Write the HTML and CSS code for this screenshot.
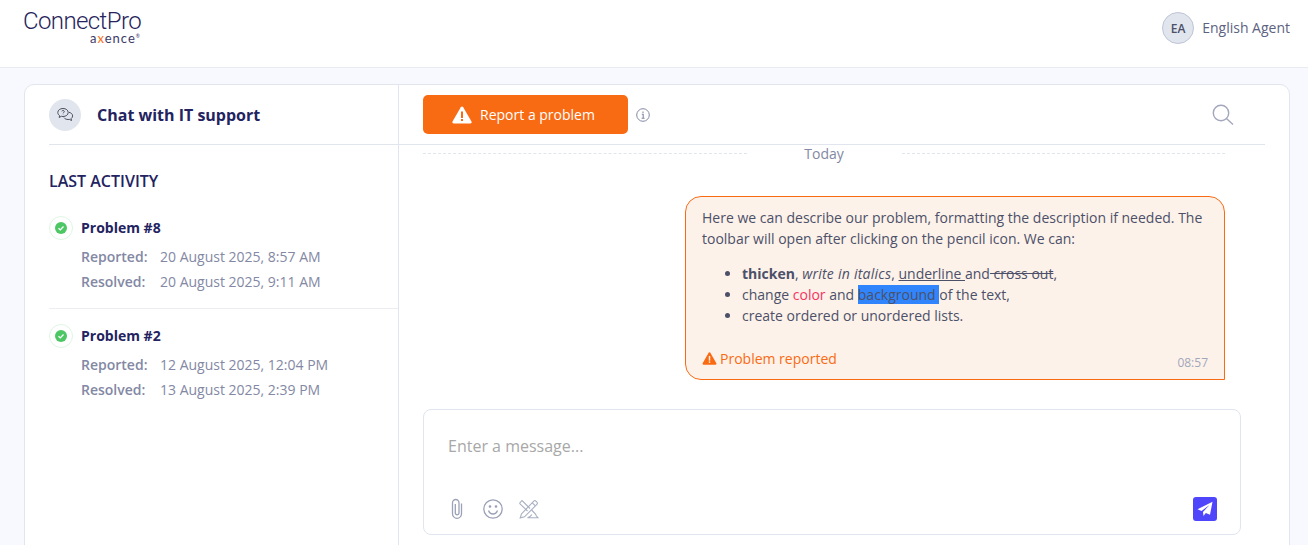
FILE: index.html
```html
<!DOCTYPE html>
<html lang="en">
<head>
<meta charset="utf-8">
<title>ConnectPro</title>
<link rel="stylesheet" href="styles.css">
</head>
<body>
<header class="topbar">
  <div class="logo">
    <span class="logo-main">ConnectPro</span>
    <span class="logo-sub">a<b>x</b>ence<sup>®</sup></span>
  </div>
  <div class="user">
    <span class="user-avatar">EA</span>
    <span class="user-name">English Agent</span>
  </div>
</header>
<main class="page">
  <section class="card">
    <aside class="side">
      <div class="side-head">
        <span class="side-icon">
          <svg width="20" height="20" viewBox="0 0 20 20" fill="none" stroke="#4b4f5e" stroke-width="1"><path d="M8 3.500c-3 0-5.200 1.700-5.200 4 0 1.300.7 2.400 1.800 3.100l-.4 1.900 2.200-1.200c.5.100 1 .2 1.600.2 3 0 5.200-1.700 5.200-4s-2.200-4-5.200-4z"/><path d="M14 7.300c2.100.4 3.600 1.800 3.600 3.600 0 1.100-.6 2.100-1.500 2.700l.4 1.900-2.100-1.100c-.4.100-.9.100-1.300.100-1.800 0-3.300-.7-4.100-1.800"/><path d="M6.800 6.300c.2-1.100 2.500-1.100 2.500.2 0 1-1.200 1-1.200 1.900M8.100 9.500v.3"/></svg>
        </span>
        <h1 class="side-title">Chat with IT support</h1>
      </div>
      <h2 class="activity-title">LAST ACTIVITY</h2>
      <article class="problem problem-first">
        <div class="problem-head">
          <span class="status"><svg width="12" height="12" viewBox="0 0 12 12"><circle cx="6" cy="6" r="6" fill="#4cc764"/><path d="M3.500 6.200l1.800 1.700 3.200-3.400" fill="none" stroke="#fff" stroke-width="1.300"/></svg></span>
          <h3 class="problem-name">Problem #8</h3>
        </div>
        <div class="problem-row"><span class="label">Reported:</span><span>20 August 2025, 8:57 AM</span></div>
        <div class="problem-row"><span class="label">Resolved:</span><span>20 August 2025, 9:11 AM</span></div>
      </article>
      <article class="problem">
        <div class="problem-head">
          <span class="status"><svg width="12" height="12" viewBox="0 0 12 12"><circle cx="6" cy="6" r="6" fill="#4cc764"/><path d="M3.500 6.200l1.800 1.700 3.200-3.400" fill="none" stroke="#fff" stroke-width="1.300"/></svg></span>
          <h3 class="problem-name">Problem #2</h3>
        </div>
        <div class="problem-row"><span class="label">Reported:</span><span>12 August 2025, 12:04 PM</span></div>
        <div class="problem-row"><span class="label">Resolved:</span><span>13 August 2025, 2:39 PM</span></div>
      </article>
    </aside>
    <div class="chat">
      <div class="chat-head">
        <button class="report" type="button">
          <svg width="20" height="18" viewBox="0 0 20 18"><path d="M10 0.500c.5 0 .9.300 1.200.700l8.300 14.300c.5.900-.1 2-1.200 2H1.700c-1.100 0-1.700-1.100-1.200-2L8.800 1.200C9.100.8 9.500.5 10 .5z" fill="#fff"/><rect x="9" y="5.500" width="2" height="6.500" fill="#f96b13"/><rect x="9" y="13" width="2" height="2" fill="#f96b13"/></svg>
          Report a problem
        </button>
        <svg class="info" width="14" height="14" viewBox="0 0 14 14" fill="none" stroke="#8388a4"><circle cx="7" cy="7" r="6.300"/><path d="M5.800 6.300H7.200V10.300M5.600 10.300H8.600M7 3.600v1.300" stroke-width="1.100"/></svg>
        <svg class="search" width="22" height="22" viewBox="0 0 22 22" fill="none" stroke="#a2a7bb" stroke-width="1.400"><circle cx="9" cy="9" r="7.700"/><path d="M14.700 14.700L21 20.500"/></svg>
      </div>
      <div class="messages">
        <div class="day"><span class="day-line"></span><span class="day-text">Today</span><span class="day-line"></span></div>
        <div class="bubble">
          <p class="bubble-text">Here we can describe our problem, formatting the description if needed. The toolbar will open after clicking on the pencil icon. We can:</p>
          <ul class="bubble-list">
            <li><strong>thicken</strong>, <em>write in italics</em>, <u>underline </u>and<s> cross out</s>,</li>
            <li>change <span class="red">color</span> and <span class="mark">background </span>of the text,</li>
            <li>create ordered or unordered lists.</li>
          </ul>
          <div class="bubble-foot">
            <span class="reported">
              <svg width="15" height="13" viewBox="0 0 20 18"><path d="M10 0.500c.5 0 .9.300 1.200.700l8.300 14.300c.5.900-.1 2-1.200 2H1.700c-1.100 0-1.700-1.100-1.200-2L8.800 1.200C9.100.8 9.500.5 10 .5z" fill="#f96b13"/><rect x="9" y="5.500" width="2" height="6.500" fill="#fdf2ea"/><rect x="9" y="13" width="2" height="2" fill="#fdf2ea"/></svg>
              Problem reported
            </span>
            <span class="time">08:57</span>
          </div>
        </div>
        <span class="thumb"></span>
      </div>
      <div class="composer">
        <div class="placeholder">Enter a message...</div>
        <div class="tools">
          <svg width="16" height="22" viewBox="0 0 16 22" fill="none" stroke="#9ba1b6" stroke-width="1.300"><path d="M12.500 5.500v10c0 2.700-2 4.800-4.500 4.800s-4.500-2.100-4.500-4.800V5c0-2 1.500-3.500 3.200-3.500S10 3 10 5v10c0 1-.8 1.800-1.800 1.800S6.300 16 6.300 15V6"/></svg>
          <svg class="tool-smile" width="20" height="20" viewBox="0 0 20 20" fill="none" stroke="#9ba1b6" stroke-width="1.300"><circle cx="10" cy="10" r="9.200"/><path d="M5.500 11.500c.8 2.300 2.500 3.500 4.500 3.500s3.700-1.200 4.500-3.500"/><circle cx="7" cy="7.500" r=".7" fill="#9ba1b6"/><circle cx="13" cy="7.500" r=".7" fill="#9ba1b6"/></svg>
          <svg class="tool-draw" width="22" height="20" viewBox="0 0 22 20" fill="none" stroke="#aab0c2" stroke-width="1.100"><path d="M3.500 14.800L15.800 2.200a1.500 1.500 0 0 1 2.100 0l1 1a1.500 1.500 0 0 1 0 2.100L6.500 17.800l-4.300 1.100z"/><path d="M14.300 3.800l3.100 3.100"/><path d="M1.500 4.300L4 1.500 12 9.500M9.500 12L1.500 4.300"/><path d="M13.500 11l3 3c1 .9 1.500 2 2 3l1.500 1.800H9.500c1.500-.5 3.500-1.800 4.500-3.300"/></svg>
          <button class="send" type="button"><svg width="16" height="16" viewBox="0 0 16 16"><path d="M15.500.8L13 13.800 8.800 12 6.500 15 6 11 12.500 4 4.500 10 .5 8.300z" fill="#fff"/></svg></button>
        </div>
      </div>
    </div>
  </section>
</main>
</body>
</html>
```
FILE: styles.css
```css
* { box-sizing: border-box; }
html, body { margin: 0; height: 545px; overflow: hidden; }
body { background: #f8f9ff; font-family: "Open Sans", sans-serif; font-size: 14px; line-height: 21px; color: #4c5068; }
h1, h2, h3, p { margin: 0; }

.topbar { height: 68px; background: #fff; border-bottom: 1px solid #e9ebf3; display: flex; justify-content: space-between; padding: 0 18px 0 24px; }
.logo { display: flex; flex-direction: column; align-items: flex-end; width: 117px; padding-top: 12px; }
.logo-main { font-family: "Roboto", sans-serif; font-weight: 300; font-size: 24px; line-height: 18px; letter-spacing: -.6px; color: #27245c; white-space: nowrap; }
.logo-sub { font-family: "Lato", sans-serif; font-size: 13px; line-height: 11px; margin-top: 3px; color: #3b3a68; letter-spacing: 1px; }
.logo-sub b { color: #f96b13; font-weight: 400; }
.logo-sub sup { font-size: 5px; line-height: 0; vertical-align: 5px; }
.user { display: flex; align-items: center; gap: 8px; height: 56px; }
.user-avatar { width: 32px; height: 32px; border-radius: 50%; background: #e1e5ee; border: 1px solid #bfc5d6; display: flex; align-items: center; justify-content: center; font-size: 12px; font-weight: 600; color: #4c5068; }
.user-name { color: #5d6280; padding-bottom: 2px; }

.page { padding: 16px 18px 0 24px; }
.card { display: flex; background: #fff; border: 1px solid #e1e5ee; border-radius: 10px; height: 600px; }

.side { width: 374px; flex: none; border-right: 1px solid #e1e5ee; padding-left: 24px; }
.side-head { height: 60px; display: flex; align-items: center; gap: 16px; border-bottom: 1px solid #e1e5ee; }
.side-icon { width: 32px; height: 32px; border-radius: 50%; background: #e1e5ee; display: flex; align-items: center; justify-content: center; }
.side-title { font-size: 16px; font-weight: 700; line-height: 22px; color: #23235f; }
.activity-title { margin: 25px 0 0; font-size: 16px; font-weight: 600; line-height: 22px; color: #23235f; }
.problem { padding: 15px 0 14px; border-bottom: 1px solid #ecedf3; }
.problem:last-child { border-bottom: 0; }
.problem-first { padding-top: 24px; }
.problem-head { display: flex; align-items: center; gap: 8px; height: 24px; margin-bottom: 4px; }
.status { width: 24px; height: 24px; border-radius: 50%; border: 1px solid #dff6e4; display: flex; align-items: center; justify-content: center; }
.problem-name { font-size: 14px; font-weight: 700; line-height: 20px; color: #23235f; }
.problem-row { display: flex; height: 25px; align-items: center; padding-left: 32px; color: #8388a4; }
.label { width: 79px; font-weight: 600; }

.chat { flex: 1; min-width: 0; padding: 0 24px; }
.chat-head { height: 60px; display: flex; align-items: center; margin: 0 0 0 -24px; padding: 0 31px 0 24px; border-bottom: 1px solid #e1e5ee; }
.report { width: 205px; height: 39px; border: 0; border-radius: 5px; padding: 0 4px 0 0; background: #f96b13; color: #fff; font: 14px/21px "Open Sans", sans-serif; display: flex; align-items: center; justify-content: center; gap: 8px; }
.info { margin-left: 8px; }
.search { margin-left: auto; }
.messages { position: relative; height: 235px; overflow: hidden; padding: 0 40px 0 0; }
.day { display: flex; align-items: center; height: 16px; }
.day-line { flex: 1; border-top: 1px dashed #e1e5ee; }
.day-text { width: 155px; text-align: center; color: #8388a4; }
.bubble { margin: 35px 0 0 262px; width: 540px; background: #fdf2ea; border: 1px solid #f96b13; border-radius: 16px 16px 0 16px; padding: 10px 16px 7px; color: #4c5068; }
.bubble-list { margin: 14px 0 22px; padding-left: 40px; }
.bubble-list strong { font-weight: 700; }
.bubble-list em { letter-spacing: .25px; }
.red { color: #f6335f; }
.mark { background: #3085fc; }
.bubble-foot { display: flex; justify-content: space-between; align-items: flex-end; }
.reported { color: #f96b13; display: flex; align-items: center; gap: 3px; margin-bottom: 3px; }
.time { font-size: 12px; line-height: 18px; color: #a2a7bb; }
.thumb { position: absolute; left: 854px; top: 94px; width: 8px; height: 61px; border-radius: 3px; background: #e1e5ee; }

.composer { margin-top: 29px; width: 818px; height: 126px; border: 1px solid #e1e5ee; border-radius: 8px; padding: 24px 23px 24px 24px; display: flex; flex-direction: column; justify-content: space-between; }
.placeholder { font-size: 16px; line-height: 24px; color: #a8a8a8; }
.tools { display: flex; align-items: center; gap: 18px; margin-bottom: -11px; padding-left: 1px; height: 24px; }
.tool-draw { margin-left: -3px; }
.send { margin-left: auto; width: 24px; height: 24px; border: 0; padding: 0; border-radius: 3px; background: #4f46fb; display: flex; align-items: center; justify-content: center; }
```
